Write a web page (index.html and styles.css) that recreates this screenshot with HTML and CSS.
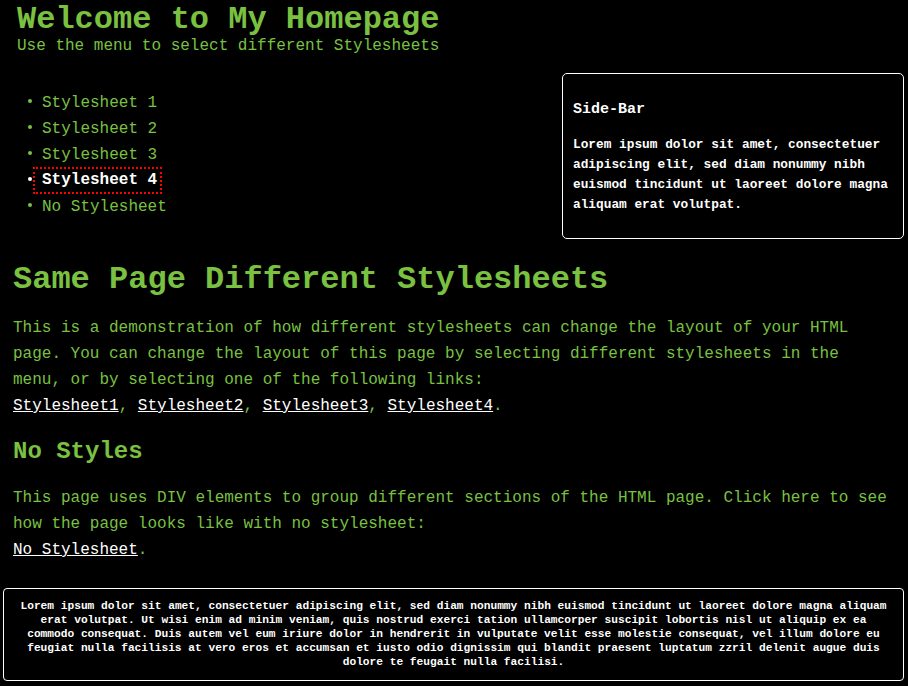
FILE: index.html
```html
<!DOCTYPE html>
<html lang="en">
<head>
<meta charset="utf-8">
<title>Same Page Different Stylesheets</title>
<link rel="stylesheet" href="styles.css">
</head>
<body>
<div class="header">
  <h1>Welcome to My Homepage</h1>
  <div class="subtitle">Use the menu to select different Stylesheets</div>
</div>
<div class="top">
  <ul class="menu">
    <li><a href="#">Stylesheet 1</a></li>
    <li><a href="#">Stylesheet 2</a></li>
    <li><a href="#">Stylesheet 3</a></li>
    <li class="active"><a href="#" class="current">Stylesheet 4</a></li>
    <li><a href="#">No Stylesheet</a></li>
  </ul>
  <div class="sidebar">
    <h3>Side-Bar</h3>
    <p>Lorem ipsum dolor sit amet, consectetuer adipiscing elit, sed diam nonummy nibh euismod tincidunt ut laoreet dolore magna aliquam erat volutpat.</p>
  </div>
</div>
<div class="main">
  <h2>Same Page Different Stylesheets</h2>
  <p>This is a demonstration of how different stylesheets can change the layout of your HTML page. You can change the layout of this page by selecting different stylesheets in the menu, or by selecting one of the following links:<br>
  <a href="#">Stylesheet1</a>, <a href="#">Stylesheet2</a>, <a href="#">Stylesheet3</a>, <a href="#">Stylesheet4</a>.</p>
  <h3>No Styles</h3>
  <p class="p2">This page uses DIV elements to group different sections of the HTML page. Click here to see how the page looks like with no stylesheet:<br>
  <a href="#">No Stylesheet</a>.</p>
</div>
<div class="footer">
  <p>Lorem ipsum dolor sit amet, consectetuer adipiscing elit, sed diam nonummy nibh euismod tincidunt ut laoreet dolore magna aliquam erat volutpat. Ut wisi enim ad minim veniam, quis nostrud exerci tation ullamcorper suscipit lobortis nisl ut aliquip ex ea commodo consequat. Duis autem vel eum iriure dolor in hendrerit in vulputate velit esse molestie consequat, vel illum dolore eu feugiat nulla facilisis at vero eros et accumsan et iusto odio dignissim qui blandit praesent luptatum zzril delenit augue duis dolore te feugait nulla facilisi.</p>
</div>
</body>
</html>
```
FILE: styles.css
```css
html, body {
  background: #000;
}
body {
  margin: 0;
  padding: 0 4px 8px 3px;
  font-family: "Liberation Mono", "Courier New", monospace;
  color: #7ac142;
  font-size: 16px;
}
a {
  color: #fff;
}
.header {
  padding: 2px 0 0 14px;
}
.header h1 {
  margin: 0;
  font-size: 32px;
  line-height: 35px;
  font-weight: bold;
}
.subtitle {
  font-size: 16px;
  line-height: 18px;
}
.top {
  display: flex;
  justify-content: space-between;
  align-items: flex-start;
  margin-top: 18px;
}
.menu {
  list-style: none;
  margin: 17px 0 0;
  padding: 0 0 0 25px;
}
.menu li {
  line-height: 26px;
}
.menu li::before {
  content: "";
  display: inline-block;
  width: 4px;
  height: 4px;
  border-radius: 50%;
  background: currentColor;
  margin-right: 10px;
  vertical-align: 4px;
}
.menu li a {
  color: #7ac142;
  text-decoration: none;
}
.menu li.active {
  color: #fff;
}
.menu li a.current {
  color: #fff;
  font-weight: bold;
  display: inline-block;
  line-height: 23px;
  padding: 0 3px 0 7px;
  margin-left: -7px;
  outline: 2px dotted #ff0000;
  vertical-align: top;
  margin-top: 1px;
}
.sidebar {
  box-sizing: border-box;
  width: 342px;
  border: 1px solid #fff;
  border-radius: 5px;
  padding: 27px 10px 23px;
  color: #fff;
  font-weight: bold;
}
.sidebar h3 {
  margin: 0 0 17px;
  font-size: 15px;
  line-height: 17px;
}
.sidebar p {
  margin: 0;
  font-size: 12.8px;
  line-height: 20px;
}
.main {
  padding: 0 10px;
  margin-top: 23px;
}
.main h2 {
  margin: 0 0 17px;
  font-size: 32px;
  line-height: 36px;
}
.main p {
  margin: 0;
  line-height: 26px;
}
.main h3 {
  margin: 19px 0 20px;
  font-size: 24px;
  line-height: 27px;
}
.footer {
  margin-top: 25px;
  border: 1px solid #fff;
  border-radius: 4px;
  padding: 10px 15px 11px;
  color: #fff;
  font-weight: bold;
  text-align: center;
}
.footer p {
  margin: 0;
  font-size: 11.2px;
  line-height: 14px;
}
```
